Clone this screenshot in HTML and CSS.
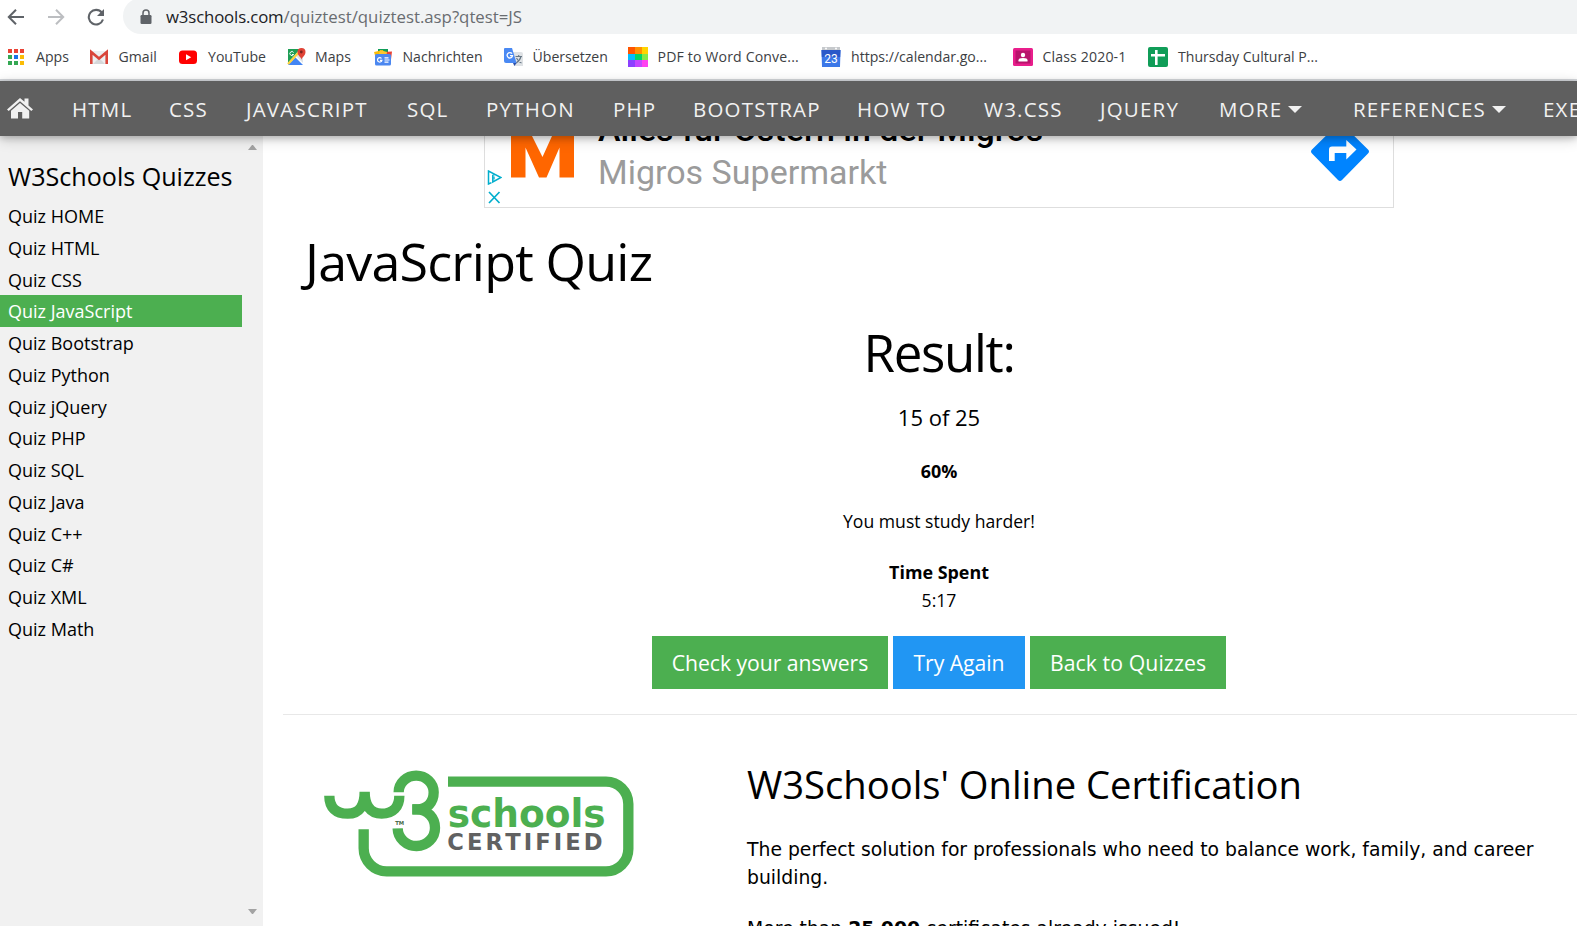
FILE: index.html
```
<!DOCTYPE html>
<html lang="en">
<head>
<meta charset="utf-8">
<title>JavaScript Quiz</title>
<link rel="stylesheet" href="styles.css">
</head>
<body>
<header class="browser">
  <div class="toolbar">
    <svg class="tool" width="20" height="18" viewBox="0 0 20 18"><path d="M18 9H3M10 1.800 2.800 9l7.200 7.200" fill="none" stroke="#5f6368" stroke-width="2"/></svg>
    <svg class="tool" width="20" height="18" viewBox="0 0 20 18"><path d="M2 9h15M10 1.800 17.200 9 10 16.200" fill="none" stroke="#bcbec1" stroke-width="2"/></svg>
    <svg class="tool" width="20" height="18" viewBox="0 0 20 18"><path d="M15.800 4.600A7.300 7.300 0 1 0 17 11.500" fill="none" stroke="#5f6368" stroke-width="2.100"/><path d="M18 1v7h-7z" fill="#5f6368"/></svg>
    <div class="address">
      <svg width="12" height="16" viewBox="0 0 12 16"><rect x=".5" y="6" width="11" height="9" rx="1.200" fill="#5f6368"/><path d="M3 7V4a3 3 0 0 1 6 0v3" fill="none" stroke="#5f6368" stroke-width="1.500"/></svg>
      <span class="url"><b>w3schools.com</b>/quiztest/quiztest.asp?qtest=JS</span>
    </div>
  </div>
  <div class="bookmarks">
    <a><svg viewBox="0 0 20 20"><g fill="#ea4335"><path d="M2 2h4v4H2zM8 2h4v4H8zM14 2h4v4h-4z"/></g><path d="M2 8h4v4H2zM2 14h4v4H2zM8 14h4v4H8z" fill="#34a853"/><path d="M8 8h4v4H8z" fill="#1a73e8"/><path d="M14 8h4v4h-4zM14 14h4v4h-4z" fill="#fbbc05"/></svg>Apps</a>
    <a><svg viewBox="0 0 20 20"><path d="M2 4h16v13H2z" fill="#eceff1"/><path d="m4 17 6-6 6 6z" fill="#d5d8da"/><path d="M2.300 17V5l7.700 6.500L17.700 5v12" fill="none" stroke="#d9453a" stroke-width="2.600"/></svg>Gmail</a>
    <a><svg viewBox="0 0 20 20"><rect x="1" y="3.500" width="18" height="13.500" rx="3.500" fill="#f00"/><path d="m8 7.300 5.200 3L8 13.200z" fill="#fff"/></svg>YouTube</a>
    <a><svg viewBox="0 0 20 20"><path d="M3 2h15v16H3z" fill="#dfe3e6"/><path d="M3 2h12L3 16z" fill="#1e9e55"/><path d="m3 18 8-8 8 8z" fill="#4285f4"/><path d="M3 17 16 3" stroke="#fdd33c" stroke-width="2.200"/><path d="m11 10 8 8" stroke="#fff" stroke-width="1.500"/><path d="M16.500 13c0-3-4-4-4-8a4 4 0 0 1 8 0c0 4-4 5-4 8z" fill="#e04336"/><circle cx="16.300" cy="5" r="1.400" fill="#7b231d"/><path d="M8.600 5.500A2 2 0 1 0 8.700 7.500H7" fill="none" stroke="#fff"/></svg>Maps</a>
    <a><svg viewBox="0 0 20 20"><path d="M5 2h10v6H5z" fill="#109d58"/><path d="m1 5 9-2 2 7-9 2z" fill="#fbbc05"/><path d="m10 5 9-.5-1 8-7-1z" fill="#ea4335"/><path d="m7 3 7 2-1 6H5z" fill="#fcc62e"/><rect x="2" y="7" width="16" height="11.500" rx="1.500" fill="#4b87f0"/><path d="M8.500 11.500a2.200 2.200 0 1 0 .4 1.800H7M11.500 10.800h4M11.500 13h5M11.500 15.200h4" fill="none" stroke="#fff" stroke-width="1.200"/></svg>Nachrichten</a>
    <a><svg viewBox="0 0 20 20"><path d="M7 5h11q2 0 2 2v12h-9z" fill="#dfe2e5"/><path d="M12.500 9.500H19M15.700 8v1.500M18 9.500q-1 4-5 6.500M13.500 11q2 4 5 5" fill="none" stroke="#677785" stroke-width="1.100"/><path d="M2 1h7l4.500 15H3q-2 0-2-2V2q0-1 1-1z" fill="#4a89f3"/><path d="M10 16h3.500L11.500 19z" fill="#2a4da8"/><path d="M9 6.700a2.700 2.700 0 1 0 .5 2H7" fill="none" stroke="#fff" stroke-width="1.300"/></svg>Übersetzen</a>
    <a class="wide"><svg viewBox="0 0 20 20"><path d="M0 0h7v7H0z" fill="#ff5500"/><path d="M7 0h7v7H7z" fill="#ff9000"/><path d="M14 0h6v7h-6z" fill="#ffd400"/><path d="M0 7h7v6H0z" fill="#00bdff"/><path d="M7 7h7v6H7z" fill="#00d566"/><path d="M14 7h6v6h-6z" fill="#84e848"/><path d="M0 13h7v7H0z" fill="#8c40ff"/><path d="M7 13h7v7H7z" fill="#c645ff"/><path d="M14 13h6v7h-6z" fill="#ff42f1"/></svg>PDF to Word Conve...</a>
    <a><svg viewBox="0 0 20 20"><path d="M1 0h18v4H1z" fill="#c6c9cc"/><path d="M.5 3h19L19 20H1z" fill="#3c78e8"/><path d="M.5 3h19l-.3 7H.8z" fill="#2a58c9"/><circle cx="5" cy="1.500" r="1" fill="#fff"/><circle cx="15" cy="1.500" r="1" fill="#fff"/><text class="day" x="10" y="15.500">23</text></svg>https://calendar.go...</a>
    <a class="wide"><svg viewBox="0 0 20 20"><rect y="1" width="20" height="18" rx="1.500" fill="#e91e8c"/><rect x="2.500" y="3.500" width="15" height="13" fill="#b8146c"/><circle cx="10" cy="8" r="2.200" fill="#fff"/><path d="M5.500 14.500v-1.300q0-2.200 4.500-2.200t4.500 2.200v1.300z" fill="#fff"/></svg>Class 2020-1</a>
    <a><svg viewBox="0 0 20 20"><rect width="20" height="20" rx="2" fill="#109d58"/><path d="M3 8.300h14M8.300 3v15" stroke="#fff" stroke-width="2.600"/></svg>Thursday Cultural P...</a>
  </div>
</header>
<nav class="topnav">
  <a class="home"><svg width="26" height="21" viewBox="0 0 26 21"><path d="M13 0 0 11.500l1.700 1.600L13 3.300l11.300 9.800 1.700-1.600-4.500-4V.5h-4v3.300zM13 5 4 12.800V20.500h7V14h4.200v6.500h7v-7.700z" fill="#f1f1f1"/></svg></a>
  <a>HTML</a><a>CSS</a><a>JAVASCRIPT</a><a>SQL</a><a>PYTHON</a><a>PHP</a><a>BOOTSTRAP</a><a>HOW TO</a><a>W3.CSS</a><a>JQUERY</a>
  <a>MORE<i class="caret"></i></a><a>REFERENCES<i class="caret"></i></a><a>EXERCISES</a>
</nav>
<div class="page">
  <aside class="sidebar">
    <div class="menu">
      <h2>W3Schools Quizzes</h2>
      <a>Quiz HOME</a><a>Quiz HTML</a><a>Quiz CSS</a><a class="active">Quiz JavaScript</a><a>Quiz Bootstrap</a><a>Quiz Python</a><a>Quiz jQuery</a><a>Quiz PHP</a><a>Quiz SQL</a><a>Quiz Java</a><a>Quiz C++</a><a>Quiz C#</a><a>Quiz XML</a><a>Quiz Math</a>
    </div>
    <div class="scroll"><i class="up"></i><i class="down"></i></div>
  </aside>
  <main class="main">
    <div class="ad">
      <div class="choices">
        <svg width="15" height="15" viewBox="0 0 15 15"><path d="M4.500 12.600 1.500 14V1L14 7.500 5.800 12V4.800" fill="none" stroke="#00aecd" stroke-width="1.500"/><path d="M7 4.300v1.200M7 6.500v3" stroke="#00aecd" stroke-width="1.300"/></svg>
        <svg width="15" height="15" viewBox="0 0 15 15"><path d="m2 1 10.500 11M12.500 1 2 12" stroke="#00aecd" stroke-width="1.700"/></svg>
      </div>
      <svg class="brand" width="63" height="42" viewBox="0 0 63 42"><path d="M0 0h21l10.500 21L41 0h22v41.500H48.500V11.500L35.500 41.500H28L14.500 11.500v30H0z" fill="#ff6600"/></svg>
      <div class="copy"><p class="lead">Alles für Ostern in der Migros</p><p class="sub">Migros Supermarkt</p></div>
      <svg class="turn" width="60" height="46" viewBox="0 0 60 46"><path d="M30-14 58 13.500q2 2 0 4L32 44q-2 2-4 0L2 17.500q-2-2 0-4z" fill="#0084ff"/><path d="M19 25V13.500q0-3 3-3h14.300V4L46.500 13.500 36.300 23.600V17H24.700v8z" fill="#fff"/></svg>
    </div>
    <h1>JavaScript Quiz</h1>
    <section class="result">
      <h1>Result:</h1>
      <p class="score">15 of 25</p>
      <p><b>60%</b></p>
      <p>You must study harder!</p>
      <p><b>Time Spent</b><br>5:17</p>
      <div class="buttons"><a>Check your answers</a><a class="blue">Try Again</a><a>Back to Quizzes</a></div>
    </section>
    <section class="cert">
      <svg class="logo" width="397" height="186" viewBox="9 0 1191 558">
        <g fill="none" stroke="#4caf50" stroke-width="31">
          <path d="M504 125H978A67 67 0 0 1 1045 192V327A67 67 0 0 1 978 394H320A69 69 0 0 1 251 325V268"/>
          <path d="M356 157A52.500 50 0 0 1 461 157C461 187 442 208 412 208H397"/>
          <path d="M397 208H410C444 208 465 235 465 263A56 54 0 0 1 353 265"/>
          <path d="M148 167C148 203 168 221 203 221C240 221 254 195 254 155C254 195 270 221 305 221C340 221 358 200 358 167"/>
        </g>
        <text class="schools" transform="translate(503 261) scale(1 .9)" textLength="474" lengthAdjust="spacingAndGlyphs">schools</text>
        <text class="certified" x="502" y="330" textLength="466">CERTIFIED</text>
        <text class="tm" x="346" y="256" textLength="26">TM</text>
      </svg>
      <div class="offer">
        <h2>W3Schools' Online Certification</h2>
        <p>The perfect solution for professionals who need to balance work, family, and career building.</p>
        <p>More than <b>25 000</b> certificates already issued!</p>
      </div>
    </section>
  </main>
</div>
</body>
</html>
```
FILE: styles.css
```
* { box-sizing: border-box; }
html { overflow: hidden; }
body {
  margin: 0;
  height: 926px;
  overflow: hidden;
  display: flex;
  flex-direction: column;
  background: #fff;
  color: #000;
  font-family: "Open Sans", "Noto Sans", sans-serif;
}
h1, h2, p { margin: 0; font-weight: 400; }

.browser { height: 81px; border-bottom: 2px solid #d5d8dc; flex: none; }
.toolbar { display: flex; height: 34px; padding-left: 6px; }
.tool { margin: 8px 20px 0 0; flex: none; }
.toolbar .tool:nth-child(3) { margin-right: 17px; }
.address {
  flex: 1;
  height: 36px;
  margin-top: -2px;
  padding-left: 17px;
  display: flex;
  align-items: center;
  gap: 14px;
  background: #f1f3f4;
  border-radius: 18px 0 0 18px;
}
.address svg { margin-top: 2px; }
.url { font-size: 16.8px; line-height: 34px; color: #696c70; margin-top: 2px; }
.url b { font-weight: 400; color: #202124; letter-spacing: -.15px; }
.bookmarks {
  display: grid;
  grid-template-columns: 82.5px 89.5px 107px 87.5px 130px 125px 193.5px 191.5px 135.5px 200px;
  padding-left: 6px;
  height: 46px;
  align-items: center;
}
.bookmarks a { display: flex; align-items: center; gap: 10px; font-size: 14.1px; line-height: 20px; color: #3c4043; white-space: nowrap; }
.bookmarks .wide { letter-spacing: .15px; }
.bookmarks svg { width: 20px; height: 20px; flex: none; overflow: visible; }
.day { font: 12px Roboto, sans-serif; fill: #fff; text-anchor: middle; letter-spacing: 0; }

.topnav {
  position: relative;
  z-index: 2;
  height: 55px;
  flex: none;
  display: grid;
  grid-template-columns: 72px 97px 77px 161px 79px 127px 80px 164px 127px 116px 119px 134px 190px 34px;
  background: #5f5f5f;
  color: #f1f1f1;
  font-size: 20.5px;
  letter-spacing: 1.2px;
  line-height: 57px;
  font-kerning: none;
  white-space: nowrap;
  box-shadow: 0 2px 6px rgba(0, 0, 0, .18), 0 3px 13px rgba(0, 0, 0, .2);
}
.topnav a:last-child { overflow: hidden; }
.home { padding: 17px 0 0 7px; line-height: 0; }
.caret { display: inline-block; border: 7px solid transparent; border-top: 7px solid #f1f1f1; border-bottom: 0; margin: 0 0 4px 6px; }

.page { display: flex; flex: 1; min-height: 0; overflow: hidden; }
.sidebar { width: 263px; flex: none; display: flex; background: #f1f1f1; }
.menu { width: 242px; padding-top: 23px; }
.menu h2 { font-size: 25.1px; line-height: 34px; padding-left: 8px; margin-bottom: 7px; white-space: nowrap; }
.menu a { display: block; height: 31.75px; line-height: 33px; padding-left: 8px; font-size: 18px; }
.menu .active { background: #4caf50; color: #fff; }
.scroll { flex: 1; display: flex; flex-direction: column; justify-content: space-between; padding: 9px 0 12px 6px; }
.up, .down { width: 9px; border: 4.500px solid transparent; }
.up { border-top: 0; border-bottom: 5px solid #a3a3a3; }
.down { border-bottom: 0; border-top: 5px solid #a3a3a3; }

.main { width: 1334px; flex: none; padding-left: 20px; }
.ad { width: 910px; height: 72px; margin-left: 201px; display: flex; border: 1px solid #dedede; border-top: 0; overflow: hidden; }
.choices { width: 26px; padding: 34px 0 0 2px; display: flex; flex-direction: column; gap: 6px; }
.choices svg { flex: none; }
.copy { margin-left: 24px; flex: 1; font-family: Roboto, sans-serif; font-size: 34px; line-height: 43px; white-space: nowrap; }
.lead { margin-top: -28px; font-weight: 500; }
.sub { color: #9b9b9b; font-size: 34px; }
.turn { margin-right: 23.500px; }
.main > h1 { font-size: 52px; line-height: 70px; letter-spacing: -.8px; margin: 18px 0 0 22px; }
.result { text-align: center; border-bottom: 1px solid #e8e8e8; padding: 21px 2px 25px 0; }
.result h1 { font-size: 51px; line-height: 70px; letter-spacing: -1.3px; }
.result p { font-size: 17.6px; line-height: 28px; margin-top: 22.5px; }
.result b { font-size: 17.9px; }
.result p.score { font-size: 22px; line-height: 34px; margin-top: 13px; }
.buttons { display: flex; justify-content: center; gap: 5px; margin-top: 22px; }
.buttons a { background: #4caf50; color: #fff; width: 236px; font-size: 21.2px; letter-spacing: -.05px; line-height: 53px; }
.buttons .blue { background: #2196f3; width: 132px; }
.buttons a:last-child { width: 196px; letter-spacing: .1px; }
.cert { display: flex; }
.logo { margin-top: 25px; flex: none; }
.schools { font: bold 133px "DejaVu Sans", sans-serif; fill: #4caf50; }
.certified { font: bold 68px "DejaVu Sans", sans-serif; fill: #616161; }
.tm { font: bold 16px "DejaVu Sans", sans-serif; fill: #4b6b4b; }
.offer { width: 810px; margin: 43px 0 0 67px; }
.offer h2 { font-size: 38.2px; line-height: 52px; margin-bottom: 26px; }
.offer p { font-family: "DejaVu Sans", sans-serif; font-size: 18.8px; line-height: 28px; margin-bottom: 23px; }
```
